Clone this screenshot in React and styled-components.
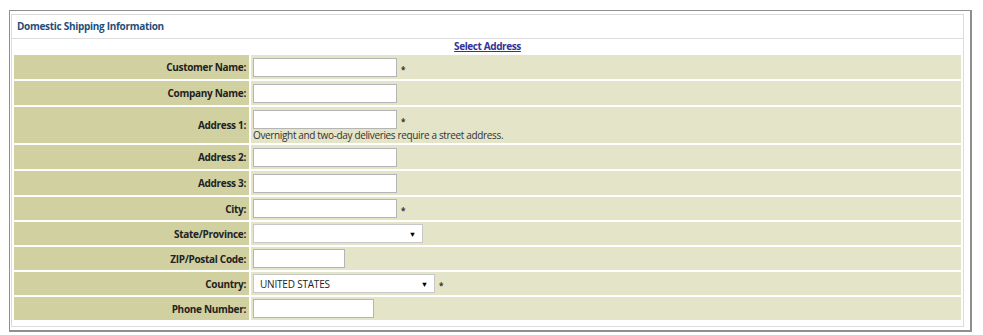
import React from "react";
import styled, { createGlobalStyle } from "styled-components";

const GlobalStyle = createGlobalStyle`
  body {
    margin: 0;
    background: #fff;
    font-family: "Open Sans", "Noto Sans", Arial, sans-serif;
    color: #222;
  }
`;

const fields = [
  { label: "Customer Name:", type: "input", width: 144, required: true, h: 24 },
  { label: "Company Name:", type: "input", width: 144, h: 24 },
  {
    label: "Address 1:",
    type: "input",
    width: 144,
    required: true,
    h: 36,
    note: "Overnight and two-day deliveries require a street address.",
  },
  { label: "Address 2:", type: "input", width: 144, h: 24 },
  { label: "Address 3:", type: "input", width: 144, h: 24 },
  { label: "City:", type: "input", width: 144, required: true, h: 23 },
  { label: "State/Province:", type: "select", width: 170, value: "", h: 23 },
  { label: "ZIP/Postal Code:", type: "input", width: 92, h: 23 },
  { label: "Country:", type: "select", width: 182, value: "UNITED STATES", required: true, h: 23 },
  { label: "Phone Number:", type: "input", width: 121, h: 23 },
];

export default function App() {
  return (
    <>
      <GlobalStyle />
      <Frame>
        <Panel>
          <PanelTitle>Domestic Shipping Information</PanelTitle>
          <FormTable>
            <tbody>
              <tr>
                <LinkCell colSpan={2}>
                  <SelectLink href="#">Select Address</SelectLink>
                </LinkCell>
              </tr>
              {fields.map((f) => (
                <FieldRow key={f.label} $h={f.h}>
                  <LabelCell>{f.label}</LabelCell>
                  <ValueCell>
                    <FieldLine>
                      {f.type === "input" ? (
                        <TextBox $w={f.width} />
                      ) : (
                        <FakeSelect $w={f.width}>
                          <span>{f.value}</span>
                          <Arrow>▼</Arrow>
                        </FakeSelect>
                      )}
                      {f.required && <Star>*</Star>}
                    </FieldLine>
                    {f.note && <Note>{f.note}</Note>}
                  </ValueCell>
                </FieldRow>
              ))}
            </tbody>
          </FormTable>
        </Panel>
      </Frame>
    </>
  );
}

const Frame = styled.div`
  margin: 10px 11px 0 9px;
  padding: 3px 6px 4px 1px;
  border: 1px solid #8f8f8f;
  border-bottom-width: 2px;
  border-right-width: 2px;
  height: 322px;
  box-sizing: border-box;
`;

const Panel = styled.div`
  border: 1px solid #dcdcdc;
  height: 313px;
  box-sizing: border-box;
`;

const PanelTitle = styled.div`
  height: 23px;
  line-height: 23px;
  padding-left: 5px;
  font-size: 10px;
  letter-spacing: -0.3px;
  font-weight: 700;
  color: #1d4f7c;
  border-bottom: 1px solid #dcdcdc;
`;

const FormTable = styled.table`
  width: 100%;
  border-spacing: 2px;
  border-collapse: separate;
`;

const LinkCell = styled.td`
  text-align: center;
  padding: 0;
  height: 12px;
  line-height: 10px;
  font-size: 9.2px;
  vertical-align: top;
`;

const SelectLink = styled.a`
  font-size: 10px;
  letter-spacing: -0.4px;
  font-weight: 700;
  color: #333399;
  text-decoration: underline;
`;

const FieldRow = styled.tr`
  height: ${(p) => p.$h}px;
`;

const LabelCell = styled.td`
  width: 232px;
  background: #d0d0a0;
  text-align: right;
  font-size: 10px;
  letter-spacing: -0.3px;
  font-weight: 700;
  color: #222;
  padding: 0 3px 0 0;
  vertical-align: middle;
  white-space: nowrap;
`;

const ValueCell = styled.td`
  background: #e4e4c8;
  padding: 0 2px;
  vertical-align: middle;
`;

const FieldLine = styled.div`
  display: flex;
  align-items: center;
`;

const TextBox = styled.div`
  width: ${(p) => p.$w}px;
  height: 19px;
  box-sizing: border-box;
  background: #fff;
  border: 1px solid #b5b5b5;
`;

const FakeSelect = styled.div`
  width: ${(p) => p.$w}px;
  height: 19px;
  box-sizing: border-box;
  background: #fff;
  border: 1px solid #c8c8c8;
  display: flex;
  align-items: center;
  justify-content: space-between;
  padding: 0 6px 0 6px;
  font-size: 10px;
  letter-spacing: -0.2px;
  color: #222;
`;

const Arrow = styled.span`
  font-size: 7.5px;
  color: #000;
`;

const Star = styled.span`
  margin-left: 4px;
  padding-top: 4px;
  font-size: 8px;
  font-weight: 700;
  color: #333;
`;

const Note = styled.div`
  font-size: 10px;
  letter-spacing: -0.35px;
  line-height: 12px;
  color: #333;
`;
